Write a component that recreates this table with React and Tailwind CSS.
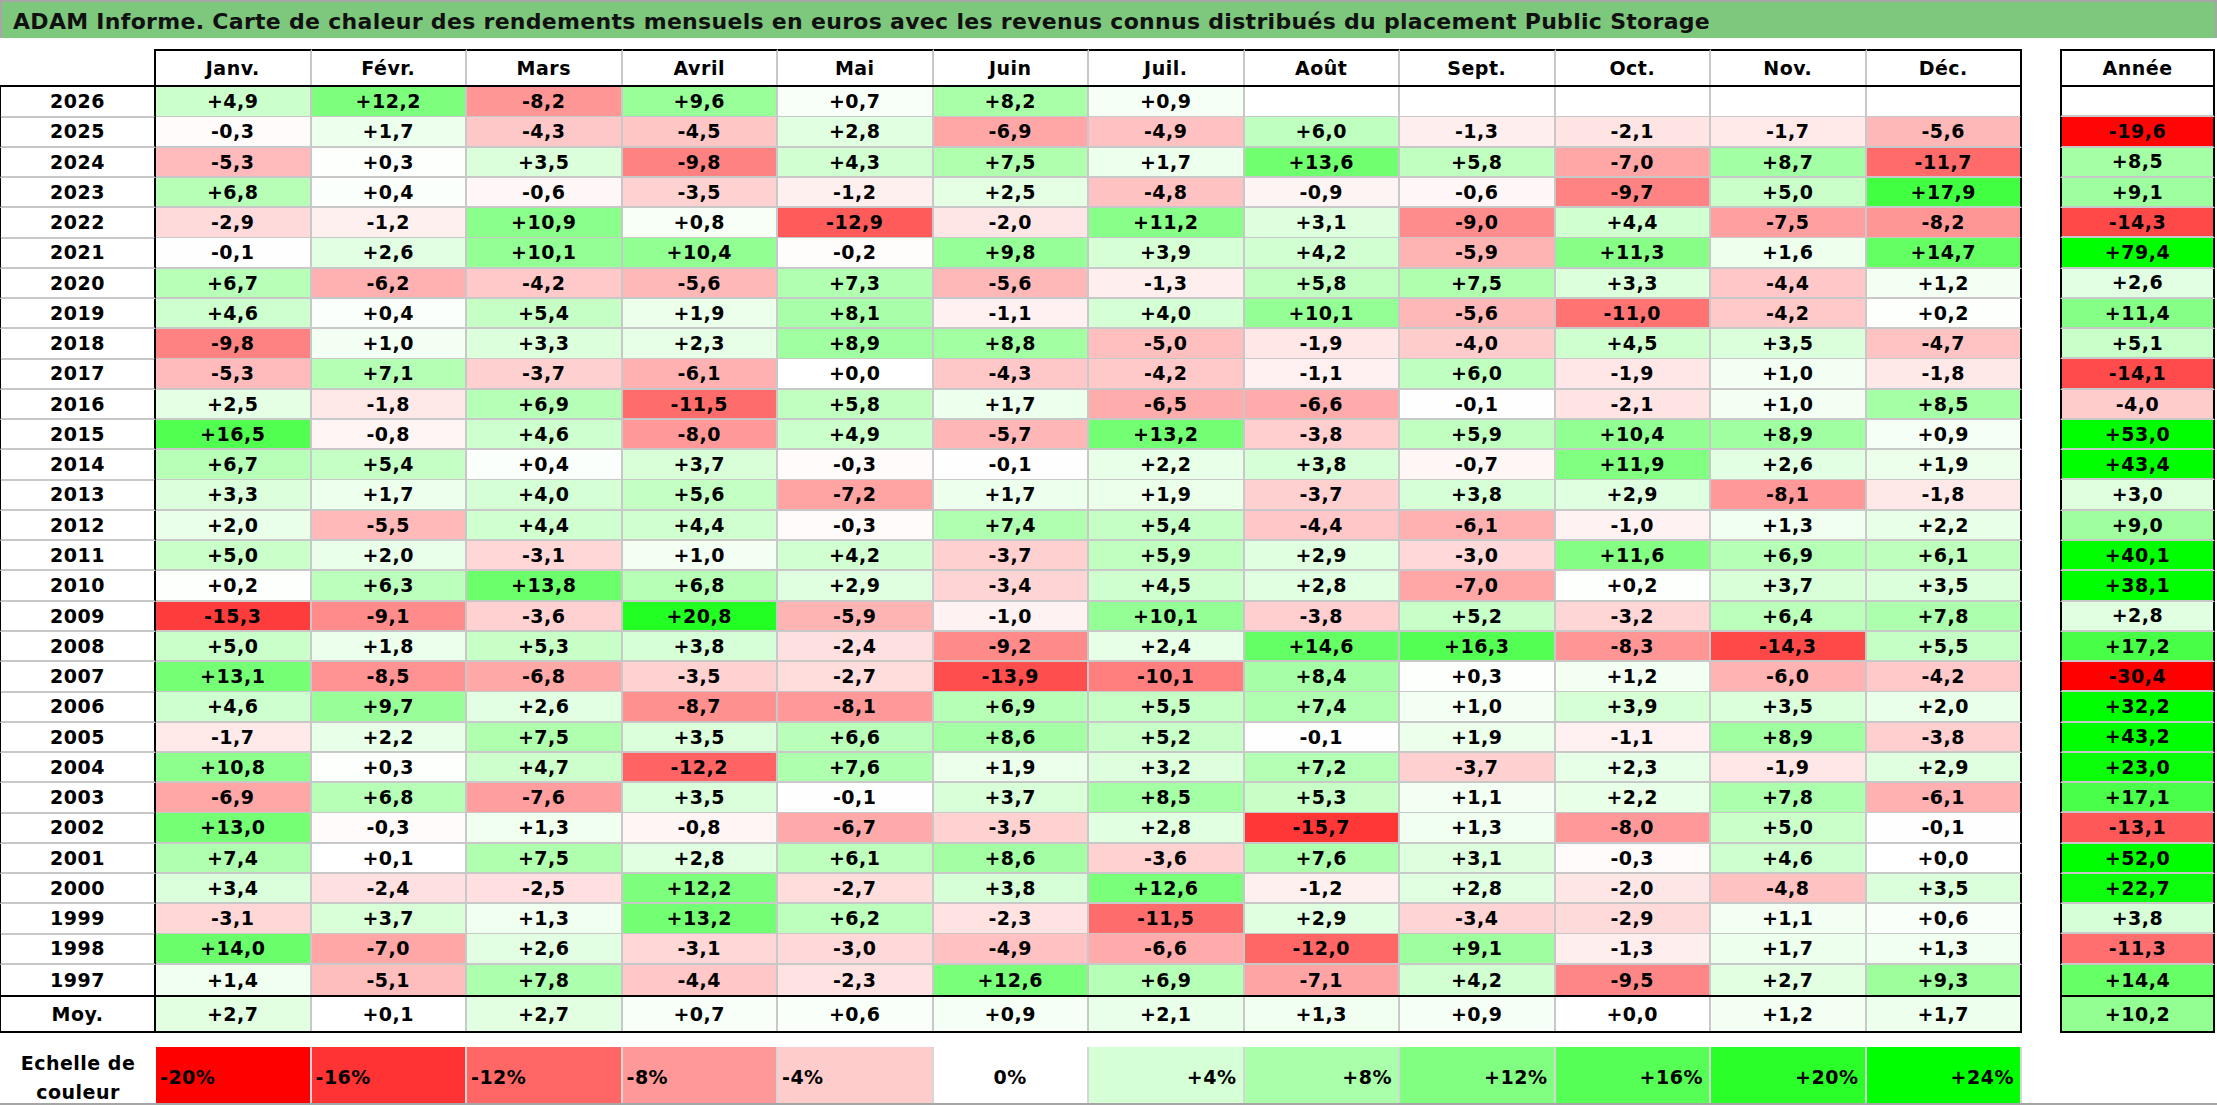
import React from "react"

const months = ["Janv.", "Févr.", "Mars", "Avril", "Mai", "Juin", "Juil.", "Août", "Sept.", "Oct.", "Nov.", "Déc."]

// annee, 12 mois, total annuel (null = pas encore connu)
const rows = [
  [2026, [4.9, 12.2, -8.2, 9.6, 0.7, 8.2, 0.9, null, null, null, null, null], null],
  [2025, [-0.3, 1.7, -4.3, -4.5, 2.8, -6.9, -4.9, 6.0, -1.3, -2.1, -1.7, -5.6], -19.6],
  [2024, [-5.3, 0.3, 3.5, -9.8, 4.3, 7.5, 1.7, 13.6, 5.8, -7.0, 8.7, -11.7], 8.5],
  [2023, [6.8, 0.4, -0.6, -3.5, -1.2, 2.5, -4.8, -0.9, -0.6, -9.7, 5.0, 17.9], 9.1],
  [2022, [-2.9, -1.2, 10.9, 0.8, -12.9, -2.0, 11.2, 3.1, -9.0, 4.4, -7.5, -8.2], -14.3],
  [2021, [-0.1, 2.6, 10.1, 10.4, -0.2, 9.8, 3.9, 4.2, -5.9, 11.3, 1.6, 14.7], 79.4],
  [2020, [6.7, -6.2, -4.2, -5.6, 7.3, -5.6, -1.3, 5.8, 7.5, 3.3, -4.4, 1.2], 2.6],
  [2019, [4.6, 0.4, 5.4, 1.9, 8.1, -1.1, 4.0, 10.1, -5.6, -11.0, -4.2, 0.2], 11.4],
  [2018, [-9.8, 1.0, 3.3, 2.3, 8.9, 8.8, -5.0, -1.9, -4.0, 4.5, 3.5, -4.7], 5.1],
  [2017, [-5.3, 7.1, -3.7, -6.1, 0.0, -4.3, -4.2, -1.1, 6.0, -1.9, 1.0, -1.8], -14.1],
  [2016, [2.5, -1.8, 6.9, -11.5, 5.8, 1.7, -6.5, -6.6, -0.1, -2.1, 1.0, 8.5], -4.0],
  [2015, [16.5, -0.8, 4.6, -8.0, 4.9, -5.7, 13.2, -3.8, 5.9, 10.4, 8.9, 0.9], 53.0],
  [2014, [6.7, 5.4, 0.4, 3.7, -0.3, -0.1, 2.2, 3.8, -0.7, 11.9, 2.6, 1.9], 43.4],
  [2013, [3.3, 1.7, 4.0, 5.6, -7.2, 1.7, 1.9, -3.7, 3.8, 2.9, -8.1, -1.8], 3.0],
  [2012, [2.0, -5.5, 4.4, 4.4, -0.3, 7.4, 5.4, -4.4, -6.1, -1.0, 1.3, 2.2], 9.0],
  [2011, [5.0, 2.0, -3.1, 1.0, 4.2, -3.7, 5.9, 2.9, -3.0, 11.6, 6.9, 6.1], 40.1],
  [2010, [0.2, 6.3, 13.8, 6.8, 2.9, -3.4, 4.5, 2.8, -7.0, 0.2, 3.7, 3.5], 38.1],
  [2009, [-15.3, -9.1, -3.6, 20.8, -5.9, -1.0, 10.1, -3.8, 5.2, -3.2, 6.4, 7.8], 2.8],
  [2008, [5.0, 1.8, 5.3, 3.8, -2.4, -9.2, 2.4, 14.6, 16.3, -8.3, -14.3, 5.5], 17.2],
  [2007, [13.1, -8.5, -6.8, -3.5, -2.7, -13.9, -10.1, 8.4, 0.3, 1.2, -6.0, -4.2], -30.4],
  [2006, [4.6, 9.7, 2.6, -8.7, -8.1, 6.9, 5.5, 7.4, 1.0, 3.9, 3.5, 2.0], 32.2],
  [2005, [-1.7, 2.2, 7.5, 3.5, 6.6, 8.6, 5.2, -0.1, 1.9, -1.1, 8.9, -3.8], 43.2],
  [2004, [10.8, 0.3, 4.7, -12.2, 7.6, 1.9, 3.2, 7.2, -3.7, 2.3, -1.9, 2.9], 23.0],
  [2003, [-6.9, 6.8, -7.6, 3.5, -0.1, 3.7, 8.5, 5.3, 1.1, 2.2, 7.8, -6.1], 17.1],
  [2002, [13.0, -0.3, 1.3, -0.8, -6.7, -3.5, 2.8, -15.7, 1.3, -8.0, 5.0, -0.1], -13.1],
  [2001, [7.4, 0.1, 7.5, 2.8, 6.1, 8.6, -3.6, 7.6, 3.1, -0.3, 4.6, 0.0], 52.0],
  [2000, [3.4, -2.4, -2.5, 12.2, -2.7, 3.8, 12.6, -1.2, 2.8, -2.0, -4.8, 3.5], 22.7],
  [1999, [-3.1, 3.7, 1.3, 13.2, 6.2, -2.3, -11.5, 2.9, -3.4, -2.9, 1.1, 0.6], 3.8],
  [1998, [14.0, -7.0, 2.6, -3.1, -3.0, -4.9, -6.6, -12.0, 9.1, -1.3, 1.7, 1.3], -11.3],
  [1997, [1.4, -5.1, 7.8, -4.4, -2.3, 12.6, 6.9, -7.1, 4.2, -9.5, 2.7, 9.3], 14.4],
]

const moy = [2.7, 0.1, 2.7, 0.7, 0.6, 0.9, 2.1, 1.3, 0.9, 0.0, 1.2, 1.7]
const moyYear = 10.2

const scale = [-20, -16, -12, -8, -4, 0, 4, 8, 12, 16, 20, 24]

// rouge jusqu'a -20%, vert jusqu'a +24%
const heat = (v) => {
  if (v === null) return "#ffffff"
  if (v >= 0) {
    const c = Math.round(255 * (1 - Math.min(v / 24, 1)))
    return `rgb(${c},255,${c})`
  }
  const c = Math.round(255 * (1 - Math.min(-v / 20, 1)))
  return `rgb(255,${c},${c})`
}

const fmt = (v) => {
  if (v === null) return ""
  return (v >= 0 ? "+" : "-") + Math.abs(v).toFixed(1).replace(".", ",")
}

const GRID = "grid grid-cols-[156px_repeat(12,minmax(0,1fr))]"

export default function App() {
  return (
    <div className="w-[2217px] h-[1105px] bg-white text-black font-['DejaVu_Sans',sans-serif] font-bold text-[19px] tracking-[0.5px] border-b-2 border-[#a6a6a6] overflow-hidden">
      <div className="h-[38px] bg-[#7ec87e] border-t-2 border-l-2 border-r-2 border-[#a6a6a6] flex items-center pl-[11px] pt-[3px] text-[22px] tracking-[0.3px] text-[#111]">
        ADAM Informe. Carte de chaleur des rendements mensuels en euros avec les revenus connus distribués du placement Public Storage
      </div>

      <div className="flex gap-[38px] mt-[11px]">
        <div className="w-[2022px]">
          <div className={`${GRID} h-[38px] border-b-2 border-black`}>
            <div className="border-r-2 border-black" />
            {months.map((m, i) => (
              <div
                key={m}
                className={
                  i === 11
                    ? "flex items-center justify-center border-t-2 border-r-2 border-black"
                    : "flex items-center justify-center border-t-2 border-t-black border-r-2 border-r-[#c8c8c8]"
                }
              >
                {m}
              </div>
            ))}
          </div>

          {rows.map(([year, vals], r) => (
            <div key={year} className={`${GRID} h-[30.27px]`}>
              <div
                className={
                  r === rows.length - 1
                    ? "flex items-center justify-center border-l border-l-black border-r-2 border-r-black"
                    : "flex items-center justify-center border-l border-l-black border-r-2 border-r-black border-b-2 border-b-[#c8c8c8]"
                }
              >
                {year}
              </div>
              {vals.map((v, i) => (
                <div
                  key={i}
                  style={{ backgroundColor: heat(v) }}
                  className={
                    r === rows.length - 1
                      ? i === 11
                        ? "flex items-center justify-center border-r-2 border-r-black"
                        : "flex items-center justify-center border-r-2 border-r-[#c8c8c8]"
                      : i === 11
                        ? "flex items-center justify-center border-r-2 border-r-black border-b-2 border-b-[#c8c8c8]"
                        : "flex items-center justify-center border-r-2 border-r-[#c8c8c8] border-b-2 border-b-[#c8c8c8]"
                  }
                >
                  {fmt(v)}
                </div>
              ))}
            </div>
          ))}

          <div className={`${GRID} h-[38px] border-t-2 border-b-2 border-black`}>
            <div className="flex items-center justify-center border-l border-l-black border-r-2 border-r-black">Moy.</div>
            {moy.map((v, i) => (
              <div
                key={i}
                style={{ backgroundColor: heat(v) }}
                className={
                  i === 11
                    ? "flex items-center justify-center border-r-2 border-r-black"
                    : "flex items-center justify-center border-r-2 border-r-[#c8c8c8]"
                }
              >
                {fmt(v)}
              </div>
            ))}
          </div>

          <div className={`${GRID} h-[56px] mt-[14px]`}>
            <div className="flex flex-col items-center justify-center leading-[29px] pt-[2px]">
              <span>Echelle de</span>
              <span>couleur</span>
            </div>
            {scale.map((s) => (
              <div
                key={s}
                style={{ backgroundColor: heat(s) }}
                className={
                  s < 0
                    ? "flex items-center justify-start pl-[4px] border-r-2 border-r-[#d6d6d6]"
                    : s === 0
                      ? "flex items-center justify-center border-r-2 border-r-[#d6d6d6]"
                      : "flex items-center justify-end pr-[6px] border-r-2 border-r-[#d6d6d6]"
                }
              >
                {s > 0 ? `+${s}%` : `${s}%`}
              </div>
            ))}
          </div>
        </div>

        <div className="w-[155px]">
          <div className="h-[38px] flex items-center justify-center border-2 border-black">Année</div>
          {rows.map(([year, , total], r) => (
            <div
              key={year}
              style={{ backgroundColor: heat(total) }}
              className={
                r === rows.length - 1
                  ? "h-[30.27px] flex items-center justify-center border-l-2 border-r-2 border-black"
                  : "h-[30.27px] flex items-center justify-center border-l-2 border-r-2 border-black border-b-2 border-b-[#c8c8c8]"
              }
            >
              {fmt(total)}
            </div>
          ))}
          <div
            style={{ backgroundColor: heat(moyYear) }}
            className="h-[38px] flex items-center justify-center border-2 border-black"
          >
            {fmt(moyYear)}
          </div>
        </div>
      </div>
    </div>
  )
}
